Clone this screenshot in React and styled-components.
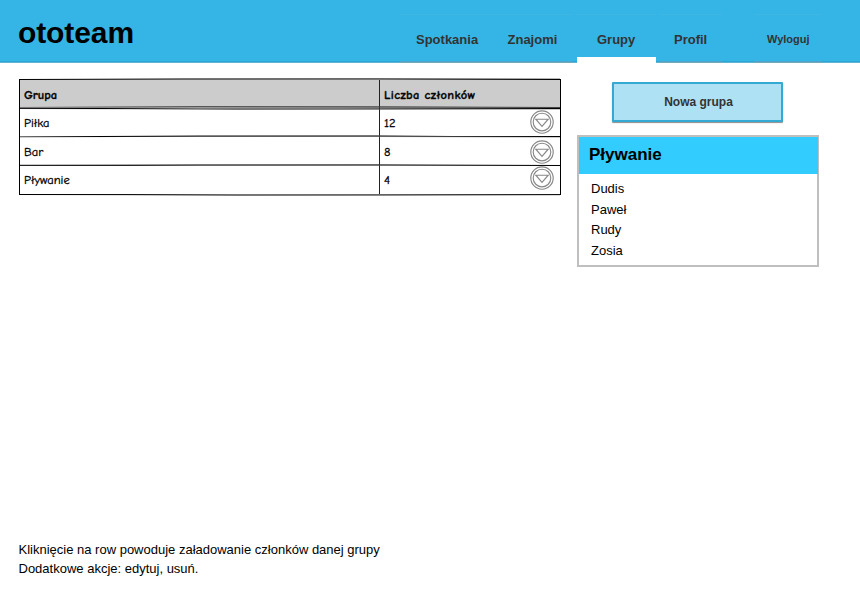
import React from "react";
import styled, { createGlobalStyle } from "styled-components";

const GlobalStyle = createGlobalStyle`
  * { box-sizing: border-box; }
  body { margin: 0; background: #fff; color: #000; font-family: "Liberation Sans", Arial, sans-serif; }
`;

const Page = styled.div`
  display: flex;
  flex-direction: column;
  width: 860px;
  height: 607px;
  overflow: hidden;
`;

const Header = styled.header`
  display: flex;
  justify-content: space-between;
  flex: none;
  height: 63px;
  padding: 0 38px 0 18px;
  background: linear-gradient(#34b5e6 0 61px, #2ba5d3 61px 62px, #62b5d2 62px);
`;

const Logo = styled.h1`
  margin: 15px 0 0;
  font-size: 30px;
  line-height: 36px;
  letter-spacing: -0.1px;
`;

const Nav = styled.nav`
  display: flex;
  width: 422px;
`;

const Tab = styled.a`
  width: ${(p) => p.$width}px;
  margin-left: ${(p) => p.$gap || 0}px;
  padding: 32px 0 0 ${(p) => p.$indent}px;
  height: 63px;
  font-size: ${(p) => p.$size || 13}px;
  font-weight: bold;
  line-height: 15px;
  white-space: nowrap;
  color: #333;
  background:
    linear-gradient(#40b7e3, #40b7e3) 0 14px / 100% 1px no-repeat,
    ${(p) =>
      p.$active
        ? "linear-gradient(#fff, #fff) 0 57px / 100% 6px no-repeat"
        : "linear-gradient(#4aa5c8 0 1px, #74a9bd 1px) 0 61px / 100% 2px no-repeat"};
`;

const Main = styled.main`
  display: flex;
  align-items: flex-start;
  flex: 1;
  padding: 15px 0 0 19px;
`;

const Table = styled.section`
  width: 542px;
  height: 118px;
  margin-right: 16px;
  background:
    linear-gradient(#000, #000) 0 1px / 1px 116px no-repeat,
    linear-gradient(#000, #000) 100% 1px / 1px 116px no-repeat;
  padding: 0 1px;
  font-family: "Comic Sans MS", "Comic Neue", Lato, sans-serif;
  font-size: 12.5px;
  -webkit-text-stroke: 0.3px #000;
`;

/* Pencil-like rule: the ink drifts between adjacent pixel rows. */
const Rule = styled.div`
  height: ${(p) => p.$ink.length}px;
  background:
    ${(p) => (p.$divided ? "linear-gradient(#333, #333) 359px 0 / 1px 100% no-repeat," : "")}
    ${(p) =>
      p.$ink
        .map((stops, i) => `linear-gradient(90deg, ${stops}) 0 ${i}px / 100% 1px no-repeat`)
        .join(",")};
`;

const Row = styled.div`
  display: grid;
  grid-template-columns: 359px 181px;
  height: ${(p) => p.$height}px;
  background: ${(p) => (p.$head ? "#ccc" : "#fff")};
  font-weight: ${(p) => (p.$head ? "bold" : "normal")};
`;

const Cell = styled.div`
  display: flex;
  justify-content: space-between;
  padding: ${(p) => p.$top}px 6px 0 4px;
  line-height: 16px;
  white-space: nowrap;

  & + & { border-left: 1px solid #222; }
`;

const Label = styled.span`
  letter-spacing: ${(p) => p.$spacing || 0}px;
`;

const ActionButton = styled.button`
  position: relative;
  width: 24px;
  height: 24px;
  margin: ${(p) => p.$shift}px 0 -8px 0;
  padding: 0;
  border: 0;
  background: none;

  svg { display: block; }
`;

const Sidebar = styled.aside`
  width: 242px;
  padding-top: 4px;
`;

const NewButton = styled.button`
  display: block;
  width: 171px;
  height: 40px;
  margin: 0 0 13px 35px;
  padding: 0 0 1px 2px;
  border: 2px solid #34a9d4;
  border-radius: 1px;
  background: #ade1f3;
  box-shadow: 0 1px 1px rgba(0, 0, 0, 0.45);
  color: #333;
  font: bold 12px "Liberation Sans", Arial, sans-serif;
`;

const Panel = styled.section`
  height: 132px;
  border: 2px solid #bfbfbf;
`;

const PanelTitle = styled.h2`
  height: 37px;
  margin: 0 -1px 0 0;
  padding: 8px 0 0 10px;
  background: #33ccff;
  font-size: 17px;
  line-height: 20px;
`;

const Members = styled.ul`
  margin: 0;
  padding: 5px 0 0 12px;
  list-style: none;
  font-size: 13px;
  line-height: 20.6px;
`;

const Notes = styled.footer`
  height: 67px;
  padding-left: 18.5px;
  font-size: 13px;
  line-height: 19px;
`;

const Note = styled.p`
  margin: 0;
`;

const groups = [
  { name: "Piłka", count: 12, height: 25, top: 5, shift: -5 },
  { name: "Bar", count: 8, height: 26, top: 6, shift: -4 },
  { name: "Pływanie", count: 4, height: 28, top: 6, shift: -6 },
];

const topInk = ["#fff 0, #777 30%, #666 66%, #bbb", "#000 0, #666 30%, #777 66%, #000"];

const headInk = [
  "#ccc 0, #555 33%, #666 66%, #ccc",
  "#777 0, #888 20%, #999 33%, #666 80%, #444",
  "#222 0, #000 15%, #777 33%, #777 60%, #000",
  "#fff 0, #ddd 20%, #777 40%, #888 60%, #ccc",
];

const rowInk = [
  [
    "#fff 0, #fff 15%, #888 33%, #777 66%, #fff 80%",
    "#777 0, #000 15%, #555 33%, #666 66%, #000",
    "#ccc 0, #fff 20%, #fff 66%, #ccc",
  ],
  ["#ccc 0, #aaa 20%, #777 33%, #666 66%, #fff", "#222 0, #222 20%, #666 33%, #777 66%, #000"],
];

const bottomInk = ["#000 0, #111 20%, #777 40%, #666 66%, #111", "#fff 0, #ddd 20%, #777 40%, #888 66%, #ddd"];

const MoreIcon = () => (
  <svg width="24" height="24" viewBox="0 0 24 24" fill="none" stroke="#888" strokeWidth="1.15">
    <circle cx="12" cy="12" r="11.2" />
    <circle cx="12" cy="12" r="8.8" />
    <path d="M5.8 9.2h12.4L12 16.3z" />
  </svg>
);

export default function App() {
  return (
    <Page>
      <GlobalStyle />
      <Header>
        <Logo>ototeam</Logo>
        <Nav>
          <Tab $width={91} $indent={16}>Spotkania</Tab>
          <Tab $width={81} $indent={16.5}>Znajomi</Tab>
          <Tab $width={79} $gap={5} $indent={20} $active>Grupy</Tab>
          <Tab $width={63} $gap={3} $indent={15}>Profil</Tab>
          <Tab $width={68} $gap={32} $indent={13} $size={11}>Wyloguj</Tab>
        </Nav>
      </Header>
      <Main>
        <Table>
          <Rule $ink={topInk} />
          <Row $head $height={26}>
            <Cell $top={7}><Label>Grupa</Label></Cell>
            <Cell $top={7}><Label $spacing={0.35}>Liczba członków</Label></Cell>
          </Row>
          <Rule $ink={headInk} $divided />
          {groups.map((group, i) => (
            <React.Fragment key={group.name}>
              {i > 0 && <Rule $ink={rowInk[i - 1]} $divided />}
              <Row $height={group.height}>
                <Cell $top={group.top}><Label>{group.name}</Label></Cell>
                <Cell $top={group.top}>
                  <Label>{group.count}</Label>
                  <ActionButton $shift={group.shift} aria-label="Akcje"><MoreIcon /></ActionButton>
                </Cell>
              </Row>
            </React.Fragment>
          ))}
          <Rule $ink={bottomInk} />
        </Table>
        <Sidebar>
          <NewButton>Nowa grupa</NewButton>
          <Panel>
            <PanelTitle>Pływanie</PanelTitle>
            <Members>
              <li>Dudis</li>
              <li>Paweł</li>
              <li>Rudy</li>
              <li>Zosia</li>
            </Members>
          </Panel>
        </Sidebar>
      </Main>
      <Notes>
        <Note>Kliknięcie na row powoduje załadowanie członków danej grupy</Note>
        <Note>Dodatkowe akcje: edytuj, usuń.</Note>
      </Notes>
    </Page>
  );
}
